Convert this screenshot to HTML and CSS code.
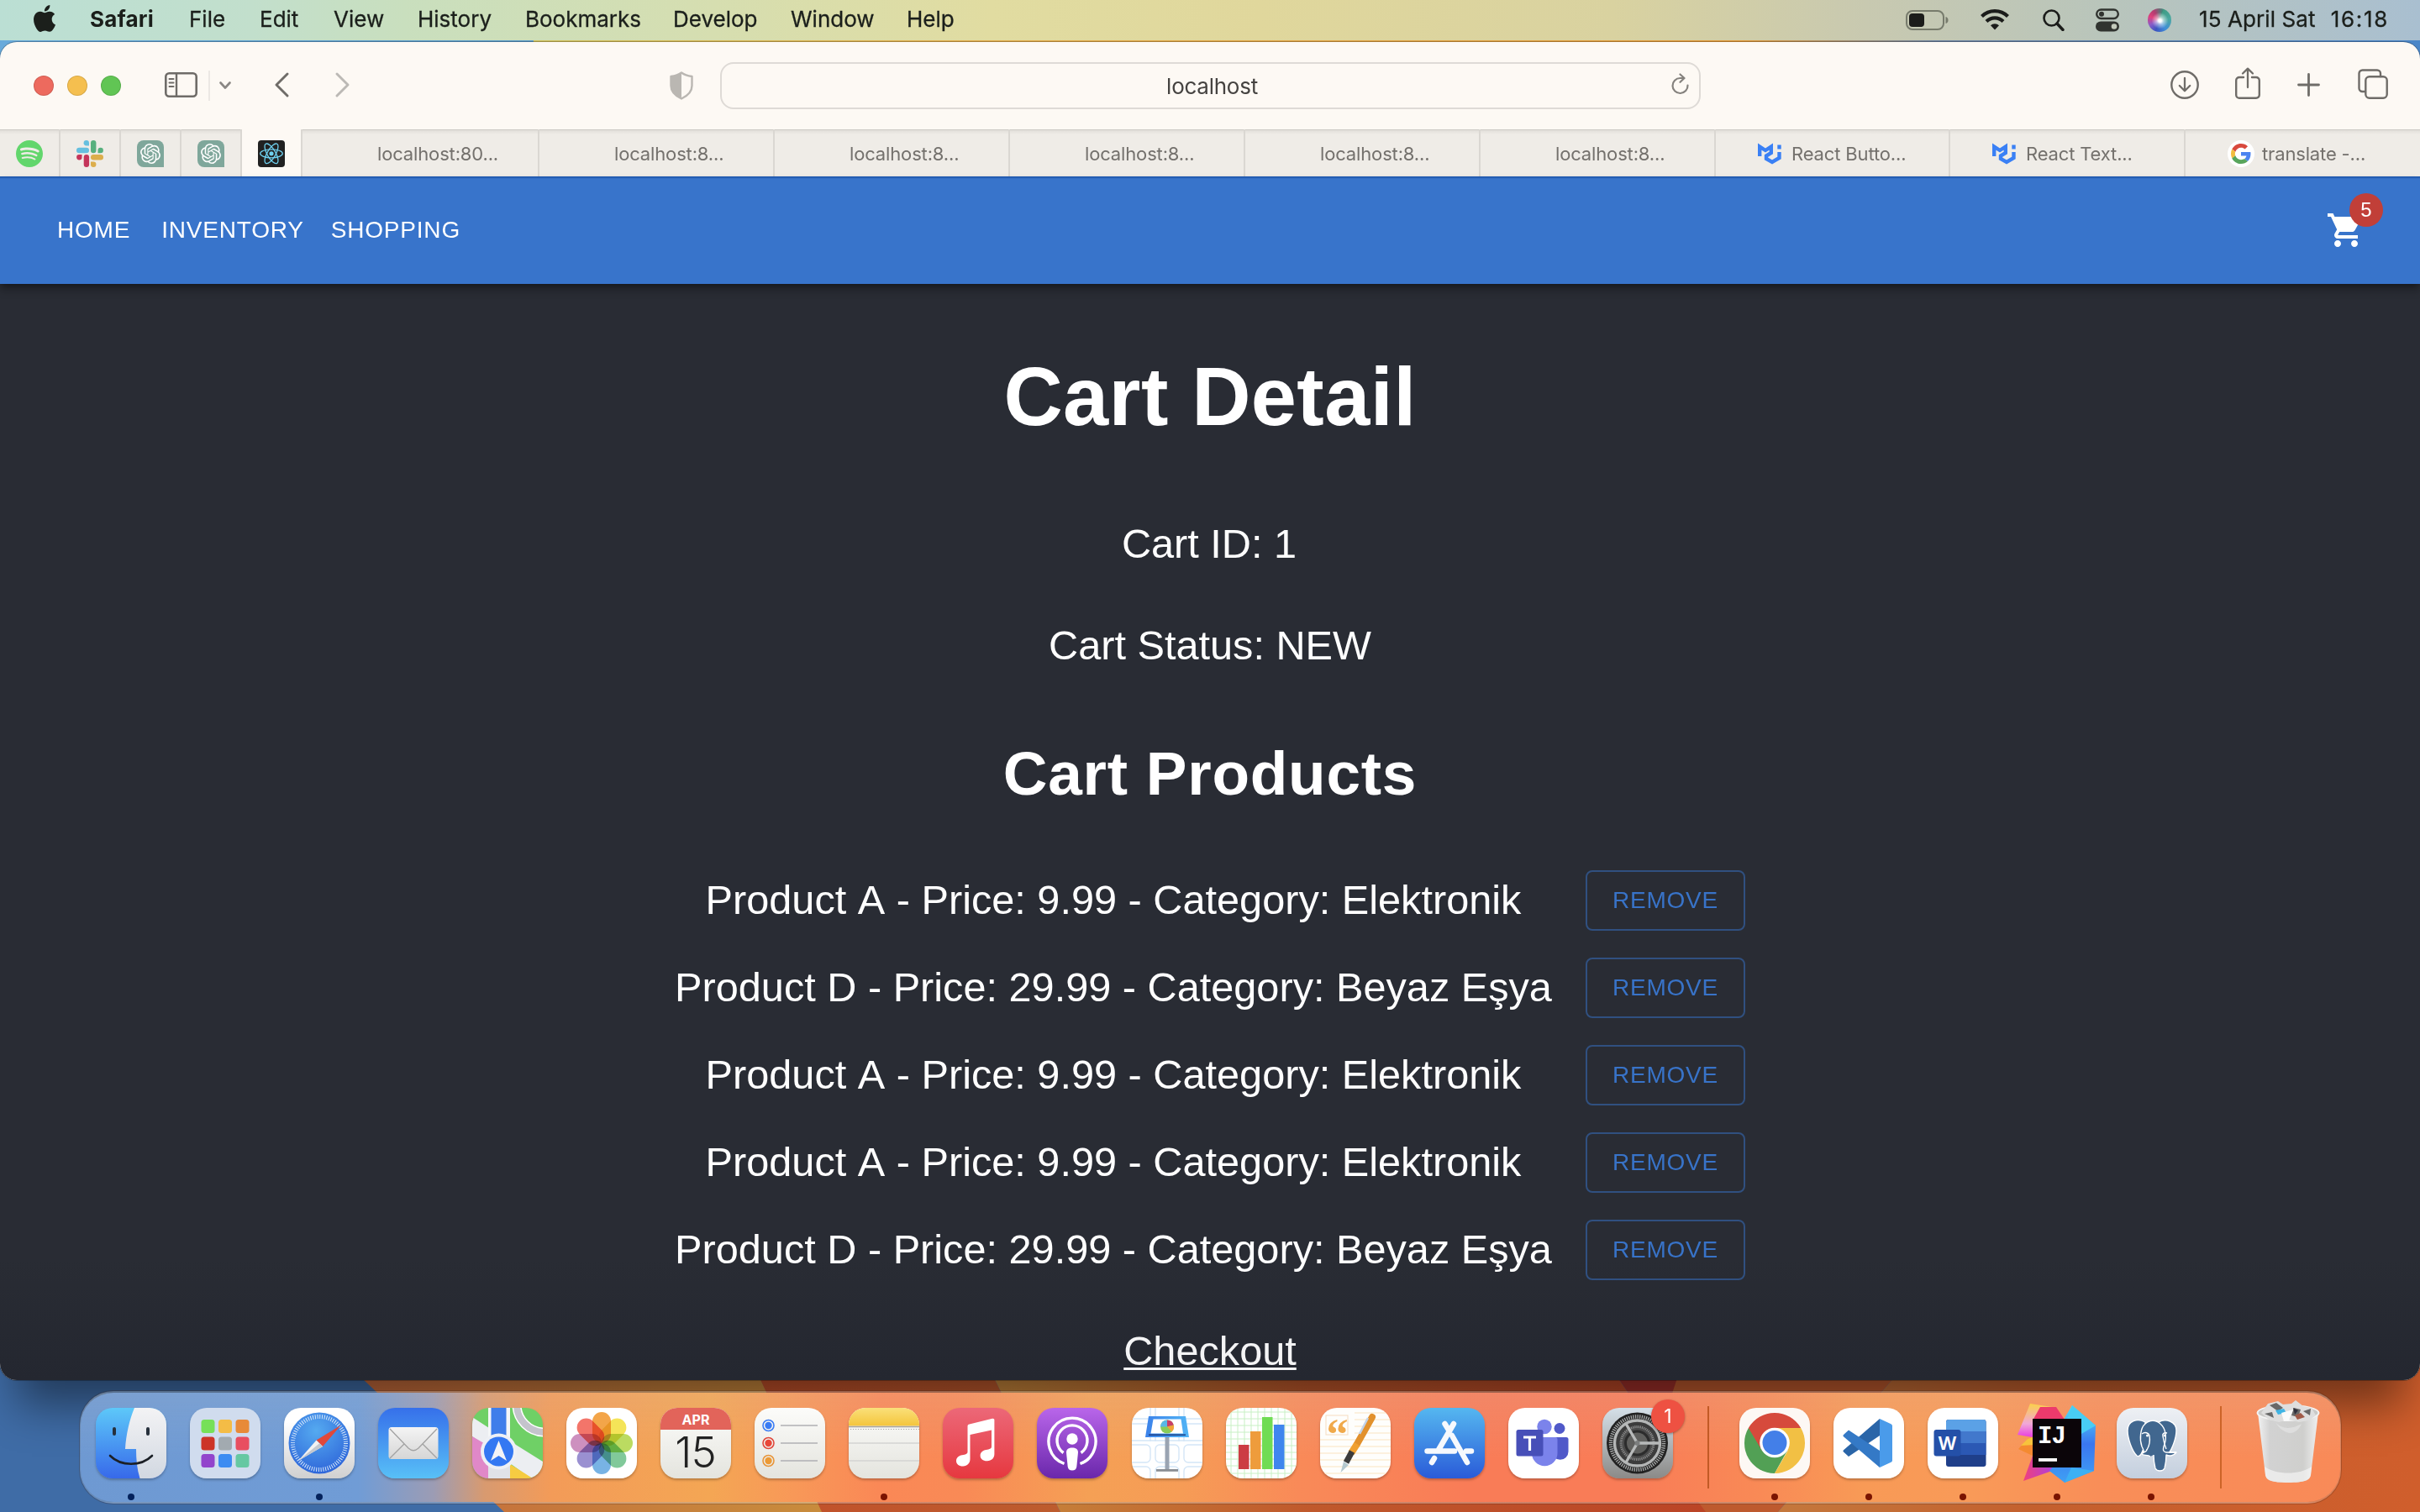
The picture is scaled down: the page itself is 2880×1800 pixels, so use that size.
FILE: index.html
```
<!DOCTYPE html>
<html lang="en">
<head>
<meta charset="utf-8">
<title>Cart Detail</title>
<link rel="stylesheet" href="styles.css">
</head>
<body>
<svg class="defs" aria-hidden="true">
  <defs>
    <linearGradient id="wTop" gradientUnits="userSpaceOnUse" x1="0" x2="2880" y1="0" y2="0"><stop offset="0" stop-color="#68aadb"/><stop offset=".2203" stop-color="#5b9bc8"/><stop offset=".2204" stop-color="#cfc05c"/><stop offset=".4" stop-color="#e2ad4c"/><stop offset=".72" stop-color="#e0993a"/><stop offset=".8" stop-color="#6c82a0"/><stop offset="1" stop-color="#4a86c8"/></linearGradient>
    <linearGradient id="wA"><stop offset="0" stop-color="#c5683c"/><stop offset="1" stop-color="#c88c3c"/></linearGradient>
    <linearGradient id="wB"><stop offset="0" stop-color="#c2502a"/><stop offset="1" stop-color="#bd5c2e"/></linearGradient>
    <linearGradient id="wC"><stop offset="0" stop-color="#c7893c"/><stop offset=".45" stop-color="#c0592c"/><stop offset="1" stop-color="#bb4426"/></linearGradient>
    <linearGradient id="wD"><stop offset="0" stop-color="#c4783c"/><stop offset=".4" stop-color="#c4602e"/><stop offset="1" stop-color="#d05e2c"/></linearGradient>
    <linearGradient id="gFinder" x2="0" y2="1"><stop offset="0" stop-color="#5dc8f9"/><stop offset="1" stop-color="#3769ea"/></linearGradient>
    <linearGradient id="gFace" x2="0" y2="1"><stop offset="0" stop-color="#f3f3f5"/><stop offset="1" stop-color="#d2d8e1"/></linearGradient>
    <linearGradient id="gWhite" x2="0" y2="1"><stop offset=".2" stop-color="#fff"/><stop offset="1" stop-color="#d0d0d0"/></linearGradient>
    <radialGradient id="gComp" cx=".45" cy=".3" r=".75"><stop offset="0" stop-color="#55aaf0"/><stop offset="1" stop-color="#2c62d8"/></radialGradient>
    <linearGradient id="gMail" x2="0" y2="1"><stop offset="0" stop-color="#3670ea"/><stop offset="1" stop-color="#58c0f7"/></linearGradient>
    <linearGradient id="gEnv" x2="0" y2="1"><stop offset="0" stop-color="#f4f4f4"/><stop offset="1" stop-color="#d6d6d6"/></linearGradient>
    <linearGradient id="gRed" x2="0" y2="1"><stop offset="0" stop-color="#ec6878"/><stop offset="1" stop-color="#e6383f"/></linearGradient>
    <linearGradient id="gPod" x2="0" y2="1"><stop offset="0" stop-color="#b966ea"/><stop offset="1" stop-color="#6a27ab"/></linearGradient>
    <linearGradient id="gStore" x2="0" y2="1"><stop offset="0" stop-color="#55b7f0"/><stop offset="1" stop-color="#2a5bd8"/></linearGradient>
    <linearGradient id="gSet" x2="0" y2="1"><stop offset="0" stop-color="#d5e0e8"/><stop offset="1" stop-color="#8b8a88"/></linearGradient>
    <linearGradient id="gPg" x2="0" y2="1"><stop offset="0" stop-color="#eef0f4"/><stop offset="1" stop-color="#c4cfde"/></linearGradient>
    <linearGradient id="gBoard"><stop offset="0" stop-color="#3b82ea"/><stop offset="1" stop-color="#52b4f5"/></linearGradient>
    <linearGradient id="gNote" x2="0" y2="1"><stop offset="0" stop-color="#fae07a"/><stop offset="1" stop-color="#f4c53c"/></linearGradient>
    <linearGradient id="gPaper" x2="0" y2="1"><stop offset="0" stop-color="#fcfcfa"/><stop offset="1" stop-color="#e4e4de"/></linearGradient>
    <linearGradient id="gBin"><stop offset="0" stop-color="#f2f2f2"/><stop offset=".2" stop-color="#d2d2d2"/><stop offset=".75" stop-color="#cfcfcd"/><stop offset="1" stop-color="#f0f0f0"/></linearGradient>
    <linearGradient id="gIjL" x2="0" y2="1"><stop offset="0" stop-color="#fbd04a"/><stop offset=".6" stop-color="#f0a8d8"/><stop offset="1" stop-color="#e83ce0"/></linearGradient>
    <linearGradient id="gIjR" x2="0" y2="1"><stop offset="0" stop-color="#54e0f6"/><stop offset=".5" stop-color="#3a76f0"/><stop offset="1" stop-color="#3fa0f4"/></linearGradient>
    <linearGradient id="gIjB"><stop offset="0" stop-color="#f0407c"/><stop offset="1" stop-color="#a040f0"/></linearGradient>
    <path id="openai" d="M22.2819 9.8211a5.9847 5.9847 0 0 0-.5157-4.9108 6.0462 6.0462 0 0 0-6.5098-2.9A6.0651 6.0651 0 0 0 4.9807 4.1818a5.9847 5.9847 0 0 0-3.9977 2.9 6.0462 6.0462 0 0 0 .7427 7.0966 5.98 5.98 0 0 0 .511 4.9107 6.051 6.051 0 0 0 6.5146 2.9001A5.9847 5.9847 0 0 0 13.2599 24a6.0557 6.0557 0 0 0 5.7718-4.2058 5.9894 5.9894 0 0 0 3.9977-2.9001 6.0557 6.0557 0 0 0-.7475-7.0729zm-9.022 12.6081a4.4755 4.4755 0 0 1-2.8764-1.0408l.1419-.0804 4.7783-2.7582a.7948.7948 0 0 0 .3927-.6813v-6.7369l2.02 1.1686a.071.071 0 0 1 .038.052v5.5826a4.504 4.504 0 0 1-4.4945 4.4944zm-9.6607-4.1254a4.4708 4.4708 0 0 1-.5346-3.0137l.142.0852 4.783 2.7582a.7712.7712 0 0 0 .7806 0l5.8428-3.3685v2.3324a.0804.0804 0 0 1-.0332.0615L9.74 19.9502a4.4992 4.4992 0 0 1-6.1408-1.6464zM2.3408 7.8956a4.485 4.485 0 0 1 2.3655-1.9728V11.6a.7664.7664 0 0 0 .3879.6765l5.8144 3.3543-2.0201 1.1685a.0757.0757 0 0 1-.071 0l-4.8303-2.7865A4.504 4.504 0 0 1 2.3408 7.872zm16.5963 3.8558L13.1038 8.364 15.1192 7.2a.0757.0757 0 0 1 .071 0l4.8303 2.7913a4.4944 4.4944 0 0 1-.6765 8.1042v-5.6772a.79.79 0 0 0-.407-.667zm2.0107-3.0231l-.142-.0852-4.7735-2.7818a.7759.7759 0 0 0-.7854 0L9.409 9.2297V6.8974a.0662.0662 0 0 1 .0284-.0615l4.8303-2.7866a4.4992 4.4992 0 0 1 6.6802 4.66zM8.3065 12.863l-2.02-1.1638a.0804.0804 0 0 1-.038-.0567V6.0742a4.4992 4.4992 0 0 1 7.3757-3.4537l-.142.0805L8.704 5.459a.7948.7948 0 0 0-.3927.6813zm1.0976-2.3654l2.602-1.4998 2.6069 1.4998v2.9994l-2.5974 1.4997-2.6067-1.4997Z"/>
    <g id="mui" fill="none" stroke="#3a80f5" stroke-width="4.4"><path d="M2.2 15V3.6L9 8l6.800-4.400V11L10 14.500V18l7 4 8.500-5V10"/><path d="M25.500 1.500v5"/></g>
  </defs>
</svg>

<div class="desktop">
  <svg class="wallpaper" viewBox="0 0 2880 1800" aria-hidden="true">
    <rect width="2880" height="900" fill="url(#wTop)"/>
    <rect y="900" width="2880" height="900" fill="#3f6ca6"/>
    <path d="M398 1610L600 1800H980L890 1610z" fill="url(#wA)"/>
    <path d="M890 1610L978 1800H1262L1168 1610z" fill="url(#wB)"/>
    <path d="M1168 1610L1262 1800H2034L1905 1610z" fill="url(#wC)"/>
    <path d="M1905 1610L2034 1800H2116L2006 1610z" fill="#a0302a"/>
    <path d="M2006 1610L1970 1720 2030 1800H2116L2280 1610z" fill="#be5a2e"/>
    <path d="M2280 1610L2116 1800H2880V1610z" fill="url(#wD)"/>
  </svg>

  <header class="menubar">
    <svg class="apple" viewBox="2.200 0 19.600 24"><path d="M12.152 6.896c-.948 0-2.415-1.078-3.960-1.040-2.040.027-3.910 1.183-4.961 3.014-2.117 3.675-.546 9.103 1.519 12.090 1.013 1.454 2.208 3.090 3.792 3.039 1.520-.065 2.090-.987 3.935-.987 1.831 0 2.350.987 3.960.948 1.637-.026 2.676-1.480 3.676-2.948 1.156-1.688 1.636-3.325 1.662-3.415-.039-.013-3.182-1.221-3.220-4.857-.026-3.040 2.480-4.494 2.597-4.559-1.429-2.090-3.623-2.324-4.390-2.376-2-.156-3.675 1.090-4.610 1.090zM15.530 3.830c.843-1.012 1.400-2.427 1.245-3.830-1.207.052-2.662.805-3.532 1.818-.780.896-1.454 2.338-1.273 3.714 1.338.104 2.715-.688 3.559-1.701"/></svg>
    <nav class="menus">
      <b>Safari</b><span>File</span><span>Edit</span><span>View</span><span>History</span><span>Bookmarks</span><span>Develop</span><span>Window</span><span>Help</span>
    </nav>
    <div class="status">
      <svg width="51" height="26" viewBox="0 0 51 26"><rect x="1" y="2" width="44" height="22" rx="7" fill="none" stroke="#777b6c" stroke-width="2"/><rect x="4" y="5" width="18" height="16" rx="4" fill="#1b1c1a"/><path d="M47.500 9v8c2-.5 3-2 3-4s-1-3.500-3-4z" fill="#777b6c"/></svg>
      <svg class="wifi" width="34" height="26" viewBox="0 0 34 26" fill="none" stroke="#1b1c1a" stroke-width="4.200"><path d="M1.500 9.500a22 22 0 0 1 31 0"/><path d="M7 15.500a14.200 14.200 0 0 1 20 0"/><path d="M17 25.500l-5-5.200a7 7 0 0 1 10 0z" fill="#1b1c1a" stroke="none"/></svg>
      <svg class="search" width="26" height="26" viewBox="0 0 26 26" fill="none" stroke="#1b1c1a"><circle cx="10.500" cy="10.500" r="9" stroke-width="2.600"/><path d="M17 17l7 7.500" stroke-width="3.400" stroke-linecap="round"/></svg>
      <svg class="control" width="28" height="28" viewBox="0 0 28 28"><rect x="1.200" y="1.500" width="25.600" height="10.500" rx="5.250" fill="none" stroke="#30332f" stroke-width="2.400"/><circle cx="7" cy="6.700" r="3" fill="#30332f"/><rect y="15.500" width="28" height="12" rx="6" fill="#30332f"/><circle cx="22" cy="21.500" r="3.300" fill="#c3cabb"/></svg>
      <i class="siri"></i>
      <span class="date">15 April Sat</span><span class="time">16:18</span>
    </div>
  </header>

  <main class="window">
    <div class="toolbar">
      <div class="lights"><i class="red"></i><i class="amber"></i><i class="green"></i></div>
      <svg class="ico sidebar" width="39" height="30" viewBox="0 0 39 30"><rect x="1.300" y="1.300" width="36.400" height="27.400" rx="4" stroke-width="2.600"/><path d="M14 1v28" stroke-width="2.400"/><path d="M5.500 8h5M5.500 12.500h5M5.500 17h5" stroke-width="2"/></svg>
      <i class="divider"></i>
      <svg class="ico chevron" width="14" height="10" viewBox="0 0 14 10"><path d="M1.500 1.500L7 7.500l5.500-6" stroke="#8a8784" stroke-width="2.600"/></svg>
      <svg class="ico back" width="17" height="30" viewBox="0 0 17 30"><path d="M15 2L2 15l13 13" stroke-width="2.900"/></svg>
      <svg class="ico forward" width="17" height="30" viewBox="0 0 17 30"><path d="M2 2l13 13L2 28" stroke="#bcb9b5" stroke-width="2.900"/></svg>
      <svg class="ico shield" width="28" height="34" viewBox="0 0 28 34"><path d="M14 1.500C10 4.500 6 5.500 1.500 6v11c0 7 5 12 12.500 15.500C21.500 29 26.500 24 26.500 17V6C22 5.500 18 4.500 14 1.500z" stroke="#bab7b2" stroke-width="2.400"/><path d="M14 1.500C10 4.500 6 5.500 1.500 6v11c0 7 5 12 12.500 15.500z" fill="#bab7b2" stroke="none"/></svg>
      <div class="address"><span>localhost</span>
        <svg class="ico reload" width="22" height="28" viewBox="0 0 22 28"><path d="M19.500 14.500a9 9 0 1 1-9-8.500h4.500" stroke="#85827e" stroke-width="2.200"/><path d="M10.500 1.500l5 4.500-5 4.800" stroke="#85827e" stroke-width="2.200"/></svg>
      </div>
      <svg class="ico download" width="34" height="34" viewBox="0 0 34 34"><circle cx="17" cy="17" r="15.700" stroke-width="2.400"/><path d="M17 9v15M10.800 18l6.200 6.200L23.200 18" stroke-width="2.300"/></svg>
      <svg class="ico share" width="30" height="38" viewBox="0 0 30 38"><path d="M10 12H5a3.800 3.800 0 0 0-3.800 3.800V33A3.800 3.800 0 0 0 5 36.800h20a3.800 3.800 0 0 0 3.800-3.800V15.800A3.800 3.800 0 0 0 25 12h-5" stroke-width="2.400"/><path d="M15 24V2M9 7.500L15 1.700l6 5.800" stroke-width="2.300"/></svg>
      <svg class="ico plus" width="27" height="28" viewBox="0 0 27 28"><path d="M13.500 1.500v25M1.500 14h24" stroke-width="2.800"/></svg>
      <svg class="ico tabsico" width="36" height="36" viewBox="0 0 36 36"><rect x="9.300" y="9.300" width="25.400" height="25.400" rx="4.500" stroke-width="2.400"/><path d="M9 27H5.500a4 4 0 0 1-4-4V5.500a4 4 0 0 1 4-4H23a4 4 0 0 1 4 4V9" stroke-width="2.400"/></svg>
    </div>

    <div class="tabs">
      <div class="pin"><svg viewBox="0 0 24 24"><path fill="#62d66c" d="M12 0C5.400 0 0 5.400 0 12s5.400 12 12 12 12-5.400 12-12S18.660 0 12 0zm5.521 17.340c-.240.359-.660.480-1.021.240-2.820-1.740-6.360-2.101-10.561-1.141-.418.122-.779-.179-.899-.539-.120-.421.180-.780.540-.900 4.560-1.021 8.520-.600 11.640 1.320.420.180.479.659.301 1.020zm1.440-3.300c-.301.420-.841.600-1.262.300-3.239-1.980-8.159-2.580-11.939-1.380-.479.120-1.020-.120-1.140-.600-.120-.480.120-1.021.600-1.141C9.600 9.900 15 10.561 18.720 12.840c.361.181.540.780.241 1.200zm.120-3.360C15.240 8.400 8.820 8.160 5.160 9.301c-.600.179-1.200-.181-1.380-.721-.180-.601.180-1.200.720-1.381 4.260-1.260 11.280-1.020 15.721 1.621.539.300.719 1.020.419 1.560-.299.421-1.020.599-1.559.300z"/></svg></div>
      <div class="pin"><svg viewBox="0 0 32 32"><g fill="#66bfdf"><path d="M15 6.500h-3.200A3.200 3.200 0 1 1 15 3.200z"/><rect y="8.800" width="15" height="6.400" rx="3.200"/></g><g fill="#58b07e"><rect x="17" width="6.400" height="15.200" rx="3.200"/><path d="M25.500 15.200V12a3.200 3.200 0 1 1 3.200 3.200z"/></g><g fill="#c4355a"><path d="M6.500 17v3.200A3.200 3.200 0 1 1 3.200 17z"/><rect x="8.700" y="17" width="6.400" height="15" rx="3.200"/></g><g fill="#dcae4c"><rect x="17" y="17" width="15" height="6.400" rx="3.200"/><path d="M17 25.500h3.200a3.200 3.200 0 1 1-3.200 3.200z"/></g></svg></div>
      <div class="pin"><svg viewBox="0 0 32 32"><path fill="#7fa79b" d="M8 0h16a8 8 0 0 1 8 8v24H8a8 8 0 0 1-8-8V8a8 8 0 0 1 8-8z"/><use href="#openai" transform="translate(4 4)" fill="#fff"/></svg></div>
      <div class="pin"><svg viewBox="0 0 32 32"><path fill="#7fa79b" d="M8 0h16a8 8 0 0 1 8 8v24H8a8 8 0 0 1-8-8V8a8 8 0 0 1 8-8z"/><use href="#openai" transform="translate(4 4)" fill="#fff"/></svg></div>
      <div class="pin active"><svg viewBox="0 0 32 32"><rect width="32" height="32" rx="4" fill="#212121"/><g fill="none" stroke="#6fd0ef" stroke-width="1.300"><ellipse cx="16" cy="15.800" rx="13.300" ry="5"/><ellipse cx="16" cy="15.800" rx="13.300" ry="5" transform="rotate(60 16 15.800)"/><ellipse cx="16" cy="15.800" rx="13.300" ry="5" transform="rotate(120 16 15.800)"/></g><circle cx="16" cy="15.800" r="2.600" fill="#6fd0ef"/></svg></div>
      <div class="tab"><span>localhost:80...</span></div>
      <div class="tab"><span>localhost:8...</span></div>
      <div class="tab"><span>localhost:8...</span></div>
      <div class="tab"><span>localhost:8...</span></div>
      <div class="tab"><span>localhost:8...</span></div>
      <div class="tab"><span>localhost:8...</span></div>
      <div class="tab"><svg viewBox="0 0 28 28"><use href="#mui" y="2"/></svg><span>React Butto...</span></div>
      <div class="tab"><svg viewBox="0 0 28 28"><use href="#mui" y="2"/></svg><span>React Text...</span></div>
      <div class="tab google"><svg viewBox="-8 -8 64 64"><circle cx="24" cy="24" r="32" fill="#fff"/><path fill="#d8493d" d="M24 9.500c3.540 0 6.710 1.220 9.210 3.600l6.850-6.850C35.900 2.380 30.470 0 24 0 14.620 0 6.510 5.380 2.560 13.220l7.980 6.190C12.430 13.720 17.740 9.500 24 9.500z"/><path fill="#4b84f0" d="M46.980 24.550c0-1.570-.150-3.090-.380-4.550H24v9.020h12.940c-.580 2.960-2.260 5.480-4.780 7.180l7.730 6c4.510-4.180 7.090-10.360 7.090-17.650z"/><path fill="#f3bd3e" d="M10.530 28.590c-.480-1.450-.760-2.990-.760-4.590s.270-3.140.760-4.590l-7.980-6.190C.920 16.460 0 20.120 0 24c0 3.880.920 7.540 2.560 10.780l7.970-6.190z"/><path fill="#58a55c" d="M24 48c6.480 0 11.930-2.130 15.890-5.810l-7.730-6c-2.150 1.450-4.920 2.300-8.160 2.300-6.260 0-11.570-4.220-13.470-9.910l-7.980 6.190C6.510 42.620 14.620 48 24 48z"/></svg><span>translate -...</span></div>
    </div>

    <div class="page">
      <div class="appbar">
        <a>Home</a><a>Inventory</a><a>Shopping</a>
        <div class="cart">
          <svg width="48" height="48" viewBox="0 0 24 24" fill="#fff"><path d="M7 18c-1.100 0-1.990.900-1.990 2S5.900 22 7 22s2-.900 2-2-.900-2-2-2zM1 2v2h2l3.600 7.590-1.350 2.450c-.160.280-.250.610-.250.960 0 1.100.900 2 2 2h12v-2H7.420c-.140 0-.250-.110-.250-.250l.030-.120.900-1.630h7.450c.750 0 1.410-.410 1.750-1.030l3.580-6.490c.080-.140.120-.310.120-.480 0-.550-.450-1-1-1H5.210l-.940-2H1zm16 16c-1.100 0-1.990.900-1.990 2s.890 2 1.990 2 2-.900 2-2-.900-2-2-2z"/></svg>
          <span class="badge">5</span>
        </div>
      </div>
      <section class="content">
        <h1>Cart Detail</h1>
        <p class="cart-id">Cart ID: 1</p>
        <p class="cart-status">Cart Status: NEW</p>
        <h2>Cart Products</h2>
        <ul class="products">
          <li><span>Product A - Price: 9.99 - Category: Elektronik</span><button>Remove</button></li>
          <li><span>Product D - Price: 29.99 - Category: Beyaz Eşya</span><button>Remove</button></li>
          <li><span>Product A - Price: 9.99 - Category: Elektronik</span><button>Remove</button></li>
          <li><span>Product A - Price: 9.99 - Category: Elektronik</span><button>Remove</button></li>
          <li><span>Product D - Price: 29.99 - Category: Beyaz Eşya</span><button>Remove</button></li>
        </ul>
        <a class="checkout">Checkout</a>
      </section>
    </div>
  </main>

  <footer class="dock">
    <div class="app on navy"><svg viewBox="0 0 84 84"><rect width="84" height="84" fill="url(#gFinder)"/><path d="M46 0C40 14 36 32 35 49h13c0 12 1 24 4.500 35H84V0z" fill="url(#gFace)"/><path d="M22 25v6M62 25v6" stroke="#26303c" stroke-width="4" stroke-linecap="round"/><path d="M17 57c13 13 37 13 50 0" fill="none" stroke="#1c2026" stroke-width="2.600" stroke-linecap="round"/></svg></div>
    <div class="app"><svg viewBox="0 0 84 84"><rect width="84" height="84" fill="#d0dcee"/><g><rect x="13.500" y="14" width="16" height="16" rx="3.500" fill="#76e058"/><rect x="34" y="14" width="16" height="16" rx="3.500" fill="#f4bc46"/><rect x="54.500" y="14" width="16" height="16" rx="3.500" fill="#e88a38"/><rect x="13.500" y="34.500" width="16" height="16" rx="3.500" fill="#cc3428"/><rect x="34" y="34.500" width="16" height="16" rx="3.500" fill="#a2aab0"/><rect x="54.500" y="34.500" width="16" height="16" rx="3.500" fill="#e84e60"/><rect x="13.500" y="55" width="16" height="16" rx="3.500" fill="#9244cc"/><rect x="34" y="55" width="16" height="16" rx="3.500" fill="#3c8cf2"/><rect x="54.500" y="55" width="16" height="16" rx="3.500" fill="#66c8a2"/></g></svg></div>
    <div class="app on navy"><svg viewBox="0 0 84 84"><rect width="84" height="84" fill="url(#gWhite)"/><circle cx="42" cy="42" r="36.500" fill="url(#gComp)"/><circle cx="42" cy="42" r="31.500" fill="none" stroke="#d6e8fa" stroke-width="5" stroke-dasharray="1 1.750"/><path d="M68 20.500L38.500 38.500 46 46z" fill="#e0483a"/><path d="M17 63l21.500-24.500L46 46z" fill="#f2f2f2"/><path d="M17 63l29-17-3.800-3.800z" fill="#c4c8ce"/></svg></div>
    <div class="app"><svg viewBox="0 0 84 84"><rect width="84" height="84" fill="url(#gMail)"/><rect x="12.500" y="23" width="59" height="38" rx="3.500" fill="url(#gEnv)"/><path d="M14 25l22 23c4 3.600 8 3.600 12 0l22-23M14 60l17-17M70 60L53 43" fill="none" stroke="#a2a2a2" stroke-width="1.300"/></svg></div>
    <div class="app"><svg viewBox="0 0 84 84"><rect width="84" height="84" fill="#6fd066"/><circle cx="86" cy="-4" r="33" fill="none" stroke="#fff" stroke-width="11"/><circle cx="86" cy="-4" r="33" fill="none" stroke="#c4c4cc" stroke-width="8"/><path d="M0 11L20 24 84 64V84H70L0 34z" fill="#eceef2"/><path d="M0 34l19 11v39H0z" fill="#e088c8"/><path d="M19 40h26v44H19z" fill="#e0e2e8"/><path d="M45 67l27 17H45z" fill="#f6cc42"/><path d="M19 0h26v40H19z" fill="#f4f6f8"/><path d="M22.500 0h18v36h-18z" fill="#3f7eea"/><circle cx="31.500" cy="52" r="21.500" fill="#eef0f5"/><circle cx="31.500" cy="52" r="17.500" fill="#3478f2"/><path d="M31.500 39l9.500 24-9.500-6-9.500 6z" fill="#f4f4f6"/></svg></div>
    <div class="app"><svg class="photos" viewBox="0 0 84 84"><rect width="84" height="84" fill="#fff"/><g opacity=".9"><rect x="31" y="5" width="22" height="37" rx="11" fill="#f29c36"/><rect x="31" y="5" width="22" height="37" rx="11" fill="#f3e146" transform="rotate(45 42 42)"/><rect x="31" y="5" width="22" height="37" rx="11" fill="#b4d850" transform="rotate(90 42 42)"/><rect x="31" y="5" width="22" height="37" rx="11" fill="#74c490" transform="rotate(135 42 42)"/><rect x="31" y="5" width="22" height="37" rx="11" fill="#6aabe2" transform="rotate(180 42 42)"/><rect x="31" y="5" width="22" height="37" rx="11" fill="#9084cc" transform="rotate(225 42 42)"/><rect x="31" y="5" width="22" height="37" rx="11" fill="#c884b8" transform="rotate(270 42 42)"/><rect x="31" y="5" width="22" height="37" rx="11" fill="#f2665a" transform="rotate(315 42 42)"/></g></svg></div>
    <div class="app"><svg viewBox="0 0 84 84"><rect width="84" height="84" fill="url(#gPaper)"/><rect width="84" height="26" fill="#e2645a"/><text x="42" y="20.300" text-anchor="middle" font-size="16" font-weight="700" fill="#fff">APR</text><text x="41.500" y="71" text-anchor="middle" font-size="51" font-weight="300" letter-spacing="-1" fill="#222">15</text></svg></div>
    <div class="app"><svg viewBox="0 0 84 84"><rect width="84" height="84" fill="url(#gPaper)"/><g stroke-width="1.600" fill="none"><circle cx="16.500" cy="21" r="6.500" stroke="#3a7cf4"/><circle cx="16.500" cy="42" r="6.500" stroke="#e0483c"/><circle cx="16.500" cy="63" r="6.500" stroke="#e8953a"/></g><circle cx="16.500" cy="21" r="4.200" fill="#3a7cf4"/><circle cx="16.500" cy="42" r="4.200" fill="#e8483a"/><circle cx="16.500" cy="63" r="4.200" fill="#ec9a36"/><path d="M31 21h44M31 42h44M31 63h44" stroke="#b0b0b4" stroke-width="1.600"/></svg></div>
    <div class="app on"><svg viewBox="0 0 84 84"><rect width="84" height="84" fill="url(#gPaper)"/><rect width="84" height="21.500" fill="url(#gNote)"/><path d="M0 22.500h84" stroke="#a6a49e" stroke-width="1.600"/><path d="M2 25.500h82" stroke="#aaa" stroke-width="1.200" stroke-dasharray="1.200 1.800"/><path d="M0 42h84M0 63h84" stroke="#d4d4d2" stroke-width="1.600"/></svg></div>
    <div class="app"><svg viewBox="0 0 84 84"><rect width="84" height="84" fill="url(#gRed)"/><path fill="#fff" d="M29.500 22c0-1.500.7-2.300 2.200-2.600L59 12.800c1.500-.4 2.400.3 2.400 1.800V55c0 5-3.500 8-8.400 8.300-5 .2-8.400-2.500-8.400-6.300 0-4 3-6.300 7-7 4-.8 6.400-1.200 6.400-4V26.500L32.500 32v29c0 5-3.500 8.300-8.200 8.600-5 .2-8.300-2.500-8.300-6.300 0-4 3-6.300 7-7 4-.7 6.500-1.200 6.500-4z"/></svg></div>
    <div class="app"><svg viewBox="0 0 84 84"><rect width="84" height="84" fill="url(#gPod)"/><g fill="none" stroke="#fff" stroke-width="3.400"><path d="M32.500 66.500a28 28 0 1 1 19 0"/><path d="M31.500 53.500a18 18 0 1 1 21 0"/></g><circle cx="42" cy="37" r="6.700" fill="#fff"/><path d="M35 53c0-4 3-5.600 7-5.600s7 1.600 7 5.600l-1.700 17c-.4 3-2.300 4.500-5.300 4.500s-4.900-1.500-5.300-4.500z" fill="#fff"/></svg></div>
    <div class="app"><svg viewBox="0 0 84 84"><rect width="84" height="84" fill="#fff"/><g fill="none" stroke="#d4e6f7" stroke-width="1.400"><rect x="-8" y="44" width="30" height="21" rx="5"/><rect x="28" y="44" width="28" height="21" rx="5"/><rect x="62" y="44" width="30" height="21" rx="5"/><rect x="-8" y="70" width="30" height="21" rx="5"/><rect x="28" y="70" width="28" height="21" rx="5"/><rect x="62" y="70" width="30" height="21" rx="5"/><path d="M0 13h84M0 19h84M0 39h84M22 0v40M28 0v40M56 0v40M62 0v40"/></g><rect x="39.500" y="35" width="5" height="39" fill="#9aa4b2"/><path d="M20 10h44l4 25H16z" fill="url(#gBoard)"/><path d="M25.500 13.500h33l2.500 17H22.500z" fill="#fff"/><circle cx="42" cy="22.500" r="8" fill="#88cc5a"/><path d="M42 22.500v-8a8 8 0 0 1 7.800 6z" fill="#c84068"/><path d="M42 22.500l7.800-2a8 8 0 0 1-2.500 8z" fill="#f2a438"/><path d="M42 22.500h-8a8 8 0 0 1 8-8z" fill="#58b8e8"/><path d="M20 32.300h44" stroke="#1a3f88" stroke-width="1.400"/><rect x="29" y="73" width="26" height="2.800" fill="#8a8e94"/></svg></div>
    <div class="app"><svg viewBox="0 0 84 84"><rect width="84" height="84" fill="#fff"/><path d="M6 0v84M14 0v84M22 0v84M30 0v84M38 0v84M46 0v84M54 0v84M62 0v84M70 0v84M78 0v84M0 5h84M0 13h84M0 21h84M0 29h84M0 37h84M0 45h84M0 53h84M0 61h84M0 69h84M0 78h84" stroke="#c8f0c4" stroke-width="1"/><rect x="15" y="44" width="12.500" height="29" fill="#cc3c44"/><rect x="29" y="28" width="12.500" height="45" fill="#ee9c3c"/><rect x="43" y="11" width="12.500" height="62" fill="#70dc54"/><rect x="57" y="20" width="12.500" height="53" fill="#3f86ee"/></svg></div>
    <div class="app"><svg viewBox="0 0 84 84"><rect width="84" height="84" fill="#fefefc"/><path d="M41 6h43M41 14h43M41 22h43M41 30h43M0 38h84M0 46h84M0 54h84M0 62h84M0 70h84M0 78h84" stroke="#fae3bf" stroke-width="1.200"/><rect x="7" y="9" width="26" height="23" fill="none" stroke="#f6dcc0" stroke-width="1"/><text x="7.500" y="49" font-size="52" font-weight="700" font-family="Liberation Serif, serif" fill="#f0a94a">“</text><path d="M62 11L44 43" stroke="#e2912c" stroke-width="8" stroke-linecap="round"/><path d="M57 12L47 31" stroke="#c2d2e8" stroke-width="2.500"/><path d="M44 43l-7 11" stroke="#f0a030" stroke-width="8"/><path d="M38 52l-7 13" stroke="#3c3c3c" stroke-width="7"/><path d="M28 64l6 4-9.500 9z" fill="#b4c8ce"/></svg></div>
    <div class="app"><svg viewBox="0 0 84 84"><rect width="84" height="84" fill="url(#gStore)"/><path d="M47 19L29 50M24 60l-3 5M36.500 19l4 6.500M45 33l18 32M15.500 51.500H48M62 51.500h6" stroke="#f6f9fd" stroke-width="6.500" stroke-linecap="round"/></svg></div>
    <div class="app"><svg viewBox="0 0 84 84"><rect width="84" height="84" fill="#fff"/><circle cx="61" cy="24.500" r="6.500" fill="#5059c9"/><path d="M52 35h17a2.500 2.500 0 0 1 2.500 2.500V52a9.500 9.500 0 0 1-19.500 0z" fill="#5059c9"/><circle cx="43" cy="22.500" r="8.700" fill="#7b83eb"/><path d="M28 35h28a2.500 2.500 0 0 1 2.500 2.500V54a15.200 15.200 0 0 1-30.500 0z" fill="#7b83eb"/><rect x="9.500" y="26" width="32" height="31.500" rx="2.500" fill="#474fb8"/><path d="M18 35h15M25.500 35v16" stroke="#fff" stroke-width="3.200"/></svg></div>
    <div class="app"><svg viewBox="0 0 84 84"><rect width="84" height="84" fill="url(#gSet)"/><circle cx="41.500" cy="42" r="36.500" fill="#222"/><circle cx="41.500" cy="42" r="31.500" fill="none" stroke="#a6a8a8" stroke-width="4.500" stroke-dasharray="1.300 1.300"/><circle cx="41.500" cy="42" r="27" fill="#3c3c3c" stroke="#b4b6b6" stroke-width="3.400"/><circle cx="41.500" cy="42" r="19.500" fill="#4c4c4c" stroke="#8a8a8a" stroke-width="3" stroke-dasharray="1.200 1"/><circle cx="41.500" cy="42" r="14" fill="#60605e" stroke="#2c2c2c" stroke-width="3"/><path d="M41.500 42H68M41.500 42L28 19M41.500 42L28 65" stroke="#b8baba" stroke-width="3.400"/><circle cx="41.500" cy="42" r="3" fill="#7c7e7e"/></svg><span class="notify">1</span></div>
    <i class="sep"></i>
    <div class="app on"><svg viewBox="0 0 84 84"><rect width="84" height="84" fill="#fdf8f4"/><path d="M42 42L10.800 24a36 36 0 0 0 31.200 54l15-27z" fill="#52a055"/><path d="M42 78l15.600-27L42 24h31.200A36 36 0 0 1 42 78z" fill="#f2c044"/><path d="M42 24h31.200a36 36 0 0 0-62.400 0L27 51z" fill="#d64a3c"/><circle cx="42" cy="41.500" r="17.800" fill="#fff"/><circle cx="42" cy="41.500" r="14.500" fill="#437fe8"/></svg></div>
    <div class="app on"><svg viewBox="0 0 84 84"><rect width="84" height="84" fill="#fff"/><path d="M55 13v20L18 58l-6-5.500a1.500 1.500 0 0 1 0-2.300z" fill="#2a65a8"/><path d="M55 71V51L18 26.500 12 32a1.500 1.500 0 0 0 0 2.300z" fill="#3479c6"/><path d="M55 13l13.500 6.200A2.500 2.500 0 0 1 70 21.500v41a2.500 2.500 0 0 1-1.500 2.300L55 71z" fill="#4a9bea"/></svg></div>
    <div class="app on"><svg viewBox="0 0 84 84"><rect width="84" height="84" fill="#fff"/><rect x="22" y="14" width="47.500" height="56" rx="3" fill="#1f3f8a"/><path d="M22 28h47.500v28H22z" fill="#2b58b4"/><path d="M22 28h47.500v14H22z" fill="#4278cc"/><path d="M22 28V17a3 3 0 0 1 3-3h41.500a3 3 0 0 1 3 3v11z" fill="#5ba1e6"/><rect x="7.500" y="26" width="32" height="31.500" rx="3" fill="#2450a8"/><text x="23.500" y="50" text-anchor="middle" font-size="22" font-weight="600" fill="#fff">W</text></svg></div>
    <div class="app on bare"><svg class="idea" viewBox="0 0 94 94"><path d="M15 0l26 4-12 20L18 40 0 37z" fill="url(#gIjL)"/><path d="M27 4h19l20 30-48 12V20z" fill="#ec3a6c"/><path d="M12 42l8-3v24L1 54z" fill="#f48a30"/><path d="M12 42l8-3v10l-16 1z" fill="#f7c33c"/><path d="M18 62L7 92l34-12 10-10z" fill="url(#gIjB)"/><path d="M65 2l28 24-2 54-35 14-18-14 25-30-10-28z" fill="url(#gIjR)"/><path d="M65 2l28 24-17 10-20-10z" fill="#48cdf4"/><path d="M91 80L56 94l8-18z" fill="#3cb0f4"/><rect x="18" y="18" width="58" height="58" fill="#0b0509"/><text x="24" y="46.500" font-size="29" font-weight="700" font-family="Liberation Mono, monospace" letter-spacing="-1" fill="#fff">IJ</text><rect x="25" y="65" width="22" height="3.800" fill="#fff"/></svg></div>
    <div class="app on"><svg viewBox="0 0 84 84"><rect width="84" height="84" fill="url(#gPg)"/><g fill="#41678f" stroke="#fff" stroke-width="1.400" stroke-linejoin="round"><path d="M50 17c8-5 21-1 21 10 0 9-5 22-9 27-6 3-10-6-10-14z"/><path d="M34 17c-9-5-21-2-21 10 0 9 5 24 11 30 4 3 8-6 9-14z"/><path d="M40 58c-3-3-10 0-10-4 4 0 2-4 0-8-3-9-2-22 4-27 5-5 13-5 18 0 7 6 8 18 4 27-1 4-1 6 3 7h12c-3 4-8 5-12 3 0 6-1 12-2 16-2 4-9 4-11 0-1-4-2-10-2-16"/></g><path d="M30 31c4-3 8-1 9 2 1 6 0 12-3 17M60 30c-4-1-6 1-5 4 1 6 2 10 4 15M30 53c3 0 6-1 6-4M62 53h9" fill="none" stroke="#fff" stroke-width="1.400"/><circle cx="36.500" cy="33" r="1.500" fill="#fff"/><circle cx="57" cy="33" r="1.400" fill="#fff"/></svg></div>
    <i class="sep second"></i>
    <div class="app bare"><svg class="trash" viewBox="0 0 76 98"><path d="M2 14h72L65 88c-1 6-7 9-27 9s-26-3-27-9z" fill="url(#gBin)"/><ellipse cx="38" cy="14" rx="36.500" ry="9" fill="#c9c9c7" stroke="#f4f4f4" stroke-width="2"/><path d="M6 14l8-11 12-3 6 4 10-1 5-4 9 7 10 2 5 9-8 6-12 2-12-3-12 3-12-3z" fill="#dedede"/><path d="M16 5l8-3 8 6-6 4zM45 8l8 2-3 9-8-2zM10 15l9-2 2 7zM56 12l9-3-1 8z" fill="#686868"/><path d="M23 11l10-2 3 5-10 2z" fill="#40b4e4"/><path d="M46 17l7-3 5 5-9 3z" fill="#a05a48"/><path d="M44 8l6 3-4 5z" fill="#30303c"/><path d="M30 14l14-4-5 13-6 1z" fill="#fafafa"/><path d="M22 24c8 10 20 10 32 3-6 14-20 16-32-3z" fill="#e4e4e4" opacity=".7"/><path d="M10 78c14 10 42 10 56 0l-1 10c-1 6-7 9-27 9s-26-3-27-9z" fill="#fafafa" opacity=".6"/></svg></div>
  </footer>
</div>
</body>
</html>
```
FILE: styles.css
```
* { box-sizing: border-box; }
html, body { margin: 0; padding: 0; }
body {
  width: 2880px;
  height: 1800px;
  overflow: hidden;
  font-family: Inter, "Liberation Sans", sans-serif;
}
.defs { position: absolute; width: 0; height: 0; }
svg { display: block; flex: none; }

.desktop {
  position: relative;
  isolation: isolate;
  width: 2880px;
  height: 1800px;
  display: flex;
  flex-direction: column;
  overflow: hidden;
}
.wallpaper { position: absolute; inset: 0; width: 2880px; height: 1800px; z-index: -1; }

/* Menu bar */
.menubar {
  height: 48px;
  flex: none;
  display: flex;
  align-items: center;
  padding-left: 40px;
  padding-right: 37px;
  font-size: 26px;
  color: #1b1f1b;
  background: linear-gradient(90deg, #bbdfd4 0, #c2dfcc 300px, #c9dfbe 480px, #d6deb0 850px, #e1dca1 1180px, #e0d79c 1500px, #d9d2a0 1920px, #c8c9b0 2220px, #b9c5bb 2500px, #a9bfd0 2880px);
}
.apple { width: 26px; height: 32px; margin-top: -4px; fill: #1b1f1b; }
.menus { display: grid; grid-template-columns: 118px 84px 88px 100px 128px 176px 140px 138px 90px; margin-left: 41px; margin-top: -3px; -webkit-text-stroke: .3px; }
.menus b { letter-spacing: .2px; -webkit-text-stroke: 0; }
.status { display: flex; align-items: center; margin-left: auto; }
.wifi { margin-left: 38px; margin-top: -2px; }
.search { margin-left: 40px; }
.control { margin-left: 37px; }
.siri {
  width: 28px; height: 28px; margin-left: 34px; border-radius: 50%;
  background: radial-gradient(circle at 52% 52%, #fff 0 8%, rgba(255,255,255,.5) 22%, transparent 48%), conic-gradient(from 20deg, #3f9c84, #4aa8a0, #3f8ed8 35%, #3c54c0 50%, #8a5cc8 62%, #e0407c 75%, #b03c70 86%, #3f8c7c);
}
.date { margin-left: 33px; margin-top: -3px; letter-spacing: .1px; -webkit-text-stroke: .3px; }
.time { margin-left: 18px; margin-top: -3px; letter-spacing: 1.7px; -webkit-text-stroke: .3px; }

/* Browser window */
.window {
  margin-top: 2px;
  height: 1593px;
  flex: none;
  border-radius: 20px;
  overflow: hidden;
  background: #fdf9f4;
  box-shadow: 0 0 0 1px rgba(0,0,0,.25), 0 50px 50px -20px rgba(0,0,0,.45);
}
.toolbar { height: 104px; display: flex; align-items: center; padding-left: 40px; }
.ico { fill: none; stroke: #6f6c68; stroke-linecap: round; stroke-linejoin: round; }
.lights { display: flex; gap: 16px; }
.lights i { width: 24px; height: 24px; border-radius: 50%; border: 1px solid rgba(0,0,0,.12); }
.red { background: #ed6a5e; }
.amber { background: #f5bf4f; }
.green { background: #61c554; }
.sidebar { margin-left: 52px; margin-top: -2px; }
.divider { width: 2px; height: 36px; margin-left: 13px; background: #ece8e4; }
.chevron { margin-left: 11px; }
.back { margin-left: 52px; margin-top: -2px; }
.forward { margin-left: 55px; margin-top: -2px; }
.shield { margin-left: 381px; margin-top: -1px; }
.address {
  width: 1167px; height: 56px; margin-left: 32px;
  border: 2px solid #dedad6; border-radius: 16px;
  display: grid; grid-template-columns: 1fr auto 1fr; align-items: center;
  font-size: 26px; color: #454341;
}
.address span { grid-column: 2; letter-spacing: -.25px; padding-left: 4px; }
.reload { justify-self: end; margin-right: 11px; margin-top: -2px; }
.download { margin-left: 559px; margin-top: -2px; }
.share { margin-left: 43px; margin-top: -6px; }
.plus { margin-left: 44px; margin-top: -3px; }
.tabsico { margin-left: 45px; margin-top: -4px; }

.tabs {
  height: 56px;
  display: grid;
  grid-template-columns: 72px 72px 72px 72px 72px 282px repeat(5, 280px) 279px 280px 280px 279px;
  background: linear-gradient(#cdcac5 0 1px, #e2dfda 1px, #efece7 6px);
  font-size: 22px;
  color: #74716d;
}
.pin, .tab { display: flex; align-items: center; border-right: 2px solid #dad7d2; height: 56px; padding-top: 2px; }
.pin { justify-content: center; }
.pin svg { width: 32px; height: 32px; }
.pin.active { background: #fdf9f4; }
.tab { padding-left: 89px; letter-spacing: -.15px; }
.tab:last-child { border-right: 0; padding-left: 91px; }
.tab svg { width: 28px; height: 28px; margin-left: -39px; margin-right: 12px; }
.tab.google svg { width: 32px; height: 32px; margin-left: -41px; margin-right: 9px; }

/* Web page */
.page { background: linear-gradient(#292c34 90%, #242730); height: 1433px; color: #fff; font-family: "Liberation Sans", Arial, sans-serif; }
.appbar {
  position: relative;
  height: 128px;
  display: flex;
  align-items: center;
  padding-left: 68px;
  background: linear-gradient(#1d57ae 0 1px, #2f68bd 2px, #3874cb 3px);
  box-shadow: 0 4px 8px -2px rgba(0,0,0,.4), 0 8px 10px rgba(0,0,0,.18);
  font-size: 28px;
  letter-spacing: .8px;
  text-transform: uppercase;
}
.appbar a { margin-right: 37px; }
.appbar a + a { margin-right: 32px; }
.cart { position: relative; margin-left: auto; margin-right: 64px; }
.badge {
  position: absolute; left: 28px; top: -20px;
  width: 40px; height: 40px; border-radius: 50%;
  display: grid; place-items: center;
  background: #c13f38; font-size: 24px; letter-spacing: 0;
}
.content { display: flex; flex-direction: column; align-items: center; padding-top: 79px; font-size: 48.66px; line-height: 56px; }
h1, h2, p { margin: 0; }
h1 { font-size: 97.33px; line-height: 112px; letter-spacing: .4px; }
.cart-id { margin-top: 90px; padding-right: 2px; }
.cart-status { margin-top: 65px; }
h2 { margin-top: 83px; font-size: 73px; line-height: 84px; letter-spacing: .75px; }
.products { list-style: none; margin: 73px 0 0; padding: 0; display: grid; gap: 32px; }
.products li { height: 72px; display: grid; grid-template-columns: 1044px 190px; column-gap: 40px; align-items: center; text-align: center; white-space: nowrap; font-kerning: none; }
.products span { margin-top: -2px; }
.products button {
  height: 72px; padding: 0; border: 2px solid #305080; border-radius: 8px;
  background: none; color: #3873c8;
  font: 28px "Liberation Sans", Arial, sans-serif; letter-spacing: .8px; text-transform: uppercase;
}
.checkout { margin-top: 56px; color: #f4f4f5; text-decoration: underline 3px; text-underline-offset: 3px; text-decoration-skip-ink: none; }

/* Dock */
.dock {
  width: 2691px; height: 134px; flex: none;
  margin: 13px auto 0; padding-left: 4px;
  display: flex;
  border-radius: 40px;
  border: 2px solid rgba(255,255,255,.22);
  border-left-width: 1px;
  border-right-width: 1px;
  background:
    linear-gradient(rgba(200,200,200,.14), rgba(255,130,40,0) 60%),
    linear-gradient(90deg, #6e99d2 0, #709cd6 330px, #9c9cb4 420px, #d89a70 480px, #f39b58 560px, #f4a654 750px, #f89858 850px, #fa8856 950px, #f98a56 1050px, #f5a055 1200px, #f69c56 1310px, #f98a58 1450px, #f97c57 1650px, #f97c57 1850px, #f98a56 2000px, #f89a56 2120px, #f99a58 2250px, #f98e58 2400px, #f98a58 2690px) padding-box;
  box-shadow: 0 0 0 1px rgba(60,30,20,.25);
}
.app { position: relative; width: 112.1px; height: 130px; flex: none; display: flex; justify-content: center; padding-top: 18px; }
.app > svg { width: 84px; height: 84px; border-radius: 20px; box-shadow: 0 2px 3px rgba(0,0,0,.25); }
.app > svg.photos { isolation: isolate; }
.photos g rect { mix-blend-mode: multiply; }
.app.bare > svg { border-radius: 0; box-shadow: none; overflow: visible; }
.app.bare > .idea { width: 94px; height: 94px; margin-top: -5px; }
.app.bare > .trash { width: 76px; height: 98px; margin-top: -8px; }
.on::after {
  content: ""; position: absolute; left: 52px; bottom: 2px;
  width: 8px; height: 8px; border-radius: 50%; background: #7a1400;
}
.on.navy::after { background: #04225c; }
.notify {
  position: absolute; left: 72px; top: 8px; width: 40px; height: 40px; border-radius: 50%;
  display: grid; place-items: center; background: #ee5142; color: #fff; font-size: 23px;
  box-shadow: 0 1px 3px rgba(0,0,0,.35);
}
.sep { width: 2px; height: 98px; margin: 16px 22px 0 27px; background: #c25a26; flex: none; }
.sep.second { background: #cc6428; margin-left: 25px; margin-right: 23px; }
```
